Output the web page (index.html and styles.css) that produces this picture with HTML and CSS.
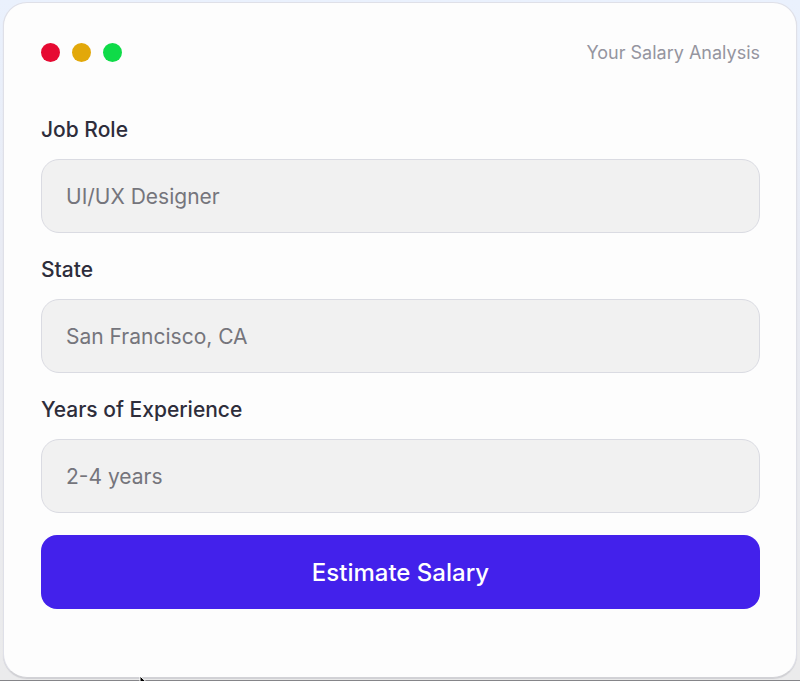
FILE: index.html
```html
<!DOCTYPE html>
<html lang="en">
<head>
  <meta charset="utf-8">
  <meta name="viewport" content="width=device-width, initial-scale=1">
  <title>Your Salary Analysis</title>
  <link rel="stylesheet" href="styles.css">
</head>
<body>

  <main class="card">
    <header class="card-header">
      <div class="dots">
        <span class="dot red"></span>
        <span class="dot yellow"></span>
        <span class="dot green"></span>
      </div>
      <span class="card-title">Your Salary Analysis</span>
    </header>

    <form class="salary-form">
      <div class="field">
        <label for="role">Job Role</label>
        <input type="text" id="role" placeholder="UI/UX Designer">
      </div>
      <div class="field">
        <label for="state">State</label>
        <input type="text" id="state" placeholder="San Francisco, CA">
      </div>
      <div class="field">
        <label for="years">Years of Experience</label>
        <input type="text" id="years" placeholder="2-4 years">
      </div>
      <button type="submit" class="submit-btn">Estimate Salary</button>
    </form>
  </main>

  <!-- Mouse pointer -->
  <svg class="cursor" width="12" height="18" viewBox="0 0 12 18">
    <path d="M1 1v13l3-3 2.500 5.500 2-1L6 10h4.500z" fill="#000" stroke="#fff"/>
  </svg>

</body>
</html>
```

FILE: styles.css
```css
* {
  box-sizing: border-box;
}
body {
  margin: 0;
  padding: 2px 3px;
  min-height: 100vh;
  display: flex;
  overflow: hidden;
  background: linear-gradient(#eaf1fd, #e9ebf3 40%, #ebebec);
  border-bottom: 1px solid #858589;
  font-family: Inter, "Liberation Sans", sans-serif;
}
.card {
  flex: 1;
  padding: 37px 36px 66px 37px;
  border: 1px solid #dfe0e8;
  border-bottom-color: #d2d2d6;
  border-radius: 24px;
  background: #fdfdfd;
  box-shadow: 0 1px 1px #cfcfd3;
}
.card-header {
  display: flex;
  justify-content: space-between;
  align-items: center;
  height: 25px;
  margin-bottom: 50px;
}
.dots {
  display: flex;
  gap: 12px;
}
.dot {
  width: 19px;
  height: 19px;
  border-radius: 50%;
}
.red {
  background: #e60a32;
}
.yellow {
  background: #e2a80a;
}
.green {
  background: #0fdb48;
}
.card-title {
  font-size: 18px;
  line-height: 25px;
  color: #95959f;
}
.salary-form {
  display: flex;
  flex-direction: column;
  gap: 22px;
}
.field {
  display: flex;
  flex-direction: column;
  gap: 14px;
}
.field label {
  font-size: 21px;
  line-height: 30px;
  font-weight: 500;
  color: #2e2d3b;
}
.field input {
  width: 100%;
  height: 74px;
  padding: 0 24px;
  border: 1px solid #dadbe2;
  border-radius: 18px;
  background: #f1f1f1;
  font: inherit;
  font-size: 21px;
}
.field input::placeholder {
  color: #75757c;
}
.submit-btn {
  height: 74px;
  border: none;
  border-radius: 16px;
  background: #4321eb;
  color: #fff;
  font: inherit;
  font-size: 24px;
  font-weight: 500;
}
.cursor {
  position: absolute;
  left: 139px;
  top: 675px;
}
```
